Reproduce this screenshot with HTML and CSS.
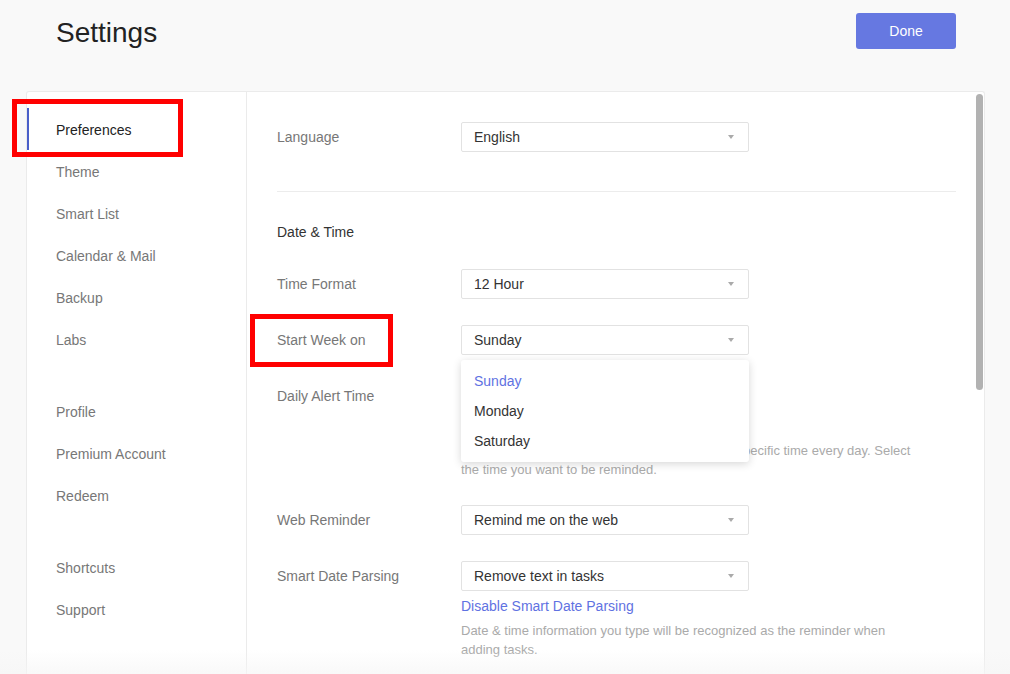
FILE: index.html
```html
<!DOCTYPE html>
<html lang="en">
<head>
<meta charset="utf-8">
<title>Settings</title>
<link rel="stylesheet" href="styles.css">
</head>
<body>
<header class="header">
  <h1 class="title">Settings</h1>
  <button class="done">Done</button>
</header>

<main class="card">
  <nav class="sidebar">
    <div class="group">
      <div class="nav-item active">Preferences</div>
      <div class="nav-item">Theme</div>
      <div class="nav-item">Smart List</div>
      <div class="nav-item">Calendar &amp; Mail</div>
      <div class="nav-item">Backup</div>
      <div class="nav-item">Labs</div>
    </div>
    <div class="group">
      <div class="nav-item">Profile</div>
      <div class="nav-item">Premium Account</div>
      <div class="nav-item">Redeem</div>
    </div>
    <div class="group">
      <div class="nav-item">Shortcuts</div>
      <div class="nav-item">Support</div>
    </div>
  </nav>

  <section class="content">
    <div class="row">
      <div class="label">Language</div>
      <div class="select"><span>English</span><i class="arrow"></i></div>
    </div>

    <hr class="divider">

    <h2 class="heading">Date &amp; Time</h2>

    <div class="row">
      <div class="label">Time Format</div>
      <div class="select"><span>12 Hour</span><i class="arrow"></i></div>
    </div>

    <div class="row">
      <div class="label">Start Week on</div>
      <div class="select open"><span>Sunday</span><i class="arrow"></i>
        <ul class="menu">
          <li class="selected">Sunday</li>
          <li>Monday</li>
          <li>Saturday</li>
        </ul>
      </div>
    </div>

    <div class="row">
      <div class="label">Daily Alert Time</div>
      <div class="select"><span>09:00</span><i class="arrow"></i></div>
    </div>
    <p class="desc daily">You will now receive a daily tasks reminder at a specific time every day. Select the time you want to be reminded.</p>

    <div class="row">
      <div class="label">Web Reminder</div>
      <div class="select"><span>Remind me on the web</span><i class="arrow"></i></div>
    </div>

    <div class="row">
      <div class="label">Smart Date Parsing</div>
      <div class="select"><span>Remove text in tasks</span><i class="arrow"></i></div>
    </div>
    <a class="link">Disable Smart Date Parsing</a>
    <p class="desc parse">Date &amp; time information you type will be recognized as the reminder when adding tasks.</p>

    <div class="scrollbar"></div>
  </section>
</main>

<div class="fade"></div>
<div class="mark mark-pref"></div>
<div class="mark mark-week"></div>
</body>
</html>
```

FILE: styles.css
```css
* { box-sizing: border-box; }

html, body {
  margin: 0;
  height: 674px;
  overflow: hidden;
}

body {
  background: #f9f9f9;
  font-family: "Liberation Sans", Arial, sans-serif;
  color: #333;
  position: relative;
}

.header {
  height: 91px;
  display: flex;
  justify-content: space-between;
  align-items: flex-start;
  padding: 13px 54px 0 56px;
}

.title {
  margin: 2px 0 0 0;
  font-size: 28px;
  font-weight: normal;
  line-height: 36px;
  color: #222;
}

.done {
  width: 100px;
  height: 36px;
  border: none;
  border-radius: 3px;
  background: #6678e1;
  color: #fff;
  font-family: inherit;
  font-size: 14px;
  padding: 0;
}

.card {
  margin: 0 25px 0 26px;
  height: 600px;
  background: #fff;
  border: 1px solid #ebebeb;
  border-bottom: none;
  border-radius: 3px 3px 0 0;
  display: flex;
}

.sidebar {
  width: 220px;
  border-right: 1px solid #ebebeb;
  padding-top: 16px;
  display: flex;
  flex-direction: column;
  gap: 30px;
}

.nav-item {
  height: 42px;
  line-height: 44px;
  padding-left: 27px;
  font-size: 14px;
  color: #777;
  border-left: 2px solid transparent;
}

.nav-item.active {
  color: #222;
  border-left-color: #4a5fc9;
}

.content {
  flex: 1;
  position: relative;
  padding: 30px 28px 0 30px;
  overflow: hidden;
}

.row {
  display: flex;
  align-items: center;
  height: 30px;
  margin-bottom: 26px;
}

.label {
  width: 184px;
  font-size: 14px;
  color: #777;
}

.select {
  position: relative;
  width: 288px;
  height: 30px;
  border: 1px solid #e2e2e2;
  border-radius: 2px;
  display: flex;
  align-items: center;
  justify-content: space-between;
  padding: 0 14px 0 12px;
  font-size: 14px;
  color: #333;
  background: #fff;
}

.arrow {
  width: 0;
  height: 0;
  border-left: 3px solid transparent;
  border-right: 3px solid transparent;
  border-top: 4px solid #aaa;
}

.menu {
  position: absolute;
  z-index: 2;
  left: -1px;
  top: 34px;
  width: 288px;
  margin: 0;
  padding: 6px 0;
  list-style: none;
  background: #fff;
  border-radius: 3px;
  box-shadow: 0 2px 8px rgba(0, 0, 0, 0.16);
}

.menu li {
  height: 30px;
  line-height: 30px;
  padding-left: 13px;
  font-size: 14px;
  color: #333;
}

.menu li.selected { color: #5f72e2; }

.divider {
  margin: 39px 0 0 0;
  border: none;
  border-top: 1px solid #ececec;
  height: 0;
}

.heading {
  margin: 30px 0 27px 0;
  font-size: 14px;
  font-weight: normal;
  line-height: 20px;
  color: #333;
}

.desc {
  margin: 0 0 26px 184px;
  width: 450px;
  font-size: 13px;
  line-height: 19px;
  color: #aaa;
}

.desc.daily { margin-top: 30px; }

.link {
  display: block;
  margin: -20px 0 0 184px;
  font-size: 14px;
  line-height: 18px;
  color: #5f72e2;
}

.desc.parse { margin-top: 6px; }

.scrollbar {
  position: absolute;
  right: 1px;
  top: 2px;
  width: 7px;
  height: 296px;
  border-radius: 4px;
  background: #b2b2b2;
}

.fade {
  position: absolute;
  left: 0;
  right: 0;
  bottom: 0;
  height: 24px;
  background: linear-gradient(rgba(249, 249, 249, 0), rgba(246, 246, 246, 0.7));
  pointer-events: none;
}

.mark {
  position: absolute;
  border: 5px solid #ff0000;
  pointer-events: none;
}

.mark-pref { left: 12px; top: 99px; width: 171px; height: 58px; }
.mark-week { left: 250px; top: 314px; width: 143px; height: 53px; }
```
